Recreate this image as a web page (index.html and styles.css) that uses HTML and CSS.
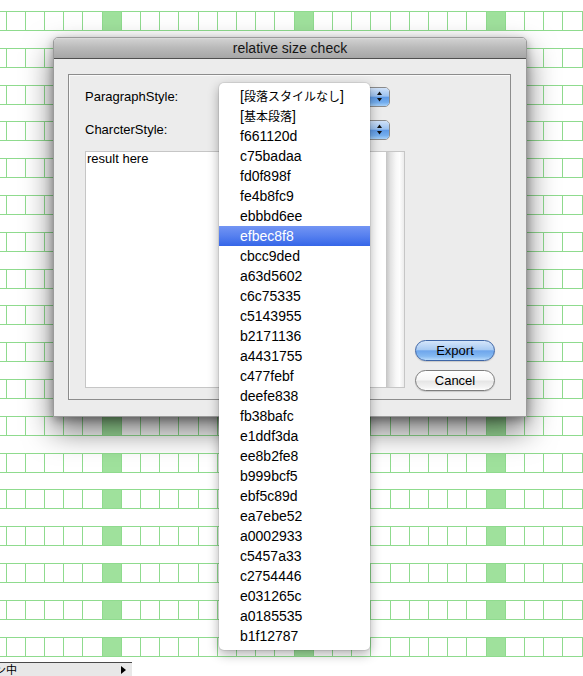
FILE: index.html
```html
<!DOCTYPE html>
<html>
<head>
<meta charset="utf-8">
<link rel="stylesheet" href="styles.css">
</head>
<body>
<div class="desktop">
  <div class="dialog">
    <div class="titlebar">relative size check</div>
    <div class="dialog-body">
      <div class="groupbox">
        <div class="row">
          <span class="label">ParagraphStyle:</span>
          <div class="popup">
            <span class="popup-face"></span>
            <span class="stepper"><svg width="19" height="19" viewBox="0 0 19 19"><polygon points="7,8 12,8 9.5,4.5" fill="#111"/><polygon points="7,11 12,11 9.5,14.5" fill="#111"/></svg></span>
          </div>
        </div>
        <div class="row">
          <span class="label">CharcterStyle:</span>
          <div class="popup">
            <span class="popup-face"></span>
            <span class="stepper"><svg width="19" height="19" viewBox="0 0 19 19"><polygon points="7,8 12,8 9.5,4.5" fill="#111"/><polygon points="7,11 12,11 9.5,14.5" fill="#111"/></svg></span>
          </div>
        </div>
        <div class="bottom">
          <div class="textarea">
            <div class="text">result here</div>
            <div class="scroll"></div>
          </div>
          <div class="buttons">
            <button class="btn primary">Export</button>
            <button class="btn">Cancel</button>
          </div>
        </div>
      </div>
    </div>
  </div>
  <ul class="menu">
    <li>[<span class="cjk">段落スタイルなし</span>]</li>
    <li>[<span class="cjk">基本段落</span>]</li>
    <li>f661120d</li>
    <li>c75badaa</li>
    <li>fd0f898f</li>
    <li>fe4b8fc9</li>
    <li>ebbbd6ee</li>
    <li class="selected">efbec8f8</li>
    <li>cbcc9ded</li>
    <li>a63d5602</li>
    <li>c6c75335</li>
    <li>c5143955</li>
    <li>b2171136</li>
    <li>a4431755</li>
    <li>c477febf</li>
    <li>deefe838</li>
    <li>fb38bafc</li>
    <li>e1ddf3da</li>
    <li>ee8b2fe8</li>
    <li>b999bcf5</li>
    <li>ebf5c89d</li>
    <li>ea7ebe52</li>
    <li>a0002933</li>
    <li>c5457a33</li>
    <li>c2754446</li>
    <li>e031265c</li>
    <li>a0185535</li>
    <li>b1f12787</li>
  </ul>
</div>
<div class="statusbar">
  <div class="status-left">
    <span class="status-text">ン中</span>
    <span class="status-arrow"></span>
  </div>
</div>
</body>
</html>
```
FILE: styles.css
```css
html, body {
  margin: 0;
  padding: 0;
}
body {
  width: 583px;
  height: 676px;
  overflow: hidden;
  background: #fff;
  font-family: "Liberation Sans", "Noto Sans CJK JP", sans-serif;
  color: #000;
}
.desktop {
  position: relative;
  height: 662px;
  background-color: #fff;
  background-image:
    linear-gradient(to bottom,
      transparent 0 20px, #fff 20px 37px,
      transparent 37px 57px, #fff 57px 74px,
      transparent 74px 94px, #fff 94px 110px,
      transparent 110px 130px, #fff 130px 147px,
      transparent 147px 167px, #fff 167px 184px),
    linear-gradient(to bottom,
      #8fdb8e 0 1px, transparent 1px 19px, #8fdb8e 19px 20px, transparent 20px 37px,
      #8fdb8e 37px 38px, transparent 38px 56px, #8fdb8e 56px 57px, transparent 57px 74px,
      #8fdb8e 74px 75px, transparent 75px 93px, #8fdb8e 93px 94px, transparent 94px 110px,
      #8fdb8e 110px 111px, transparent 111px 129px, #8fdb8e 129px 130px, transparent 130px 147px,
      #8fdb8e 147px 148px, transparent 148px 166px, #8fdb8e 166px 167px, transparent 167px 184px),
    linear-gradient(to right,
      #8fdb8e 0 1px, transparent 1px 19px, #8fdb8e 19px 20px, transparent 20px 38px,
      #8fdb8e 38px 39px, transparent 39px 57px, #8fdb8e 57px 58px, transparent 58px 76px,
      #8fdb8e 76px 77px, transparent 77px 96px),
    linear-gradient(to right, transparent 0 96px, #9fe19c 96px 116px, transparent 116px 192px);
  background-size: 100% 184px, 100% 184px, 96px 100%, 192px 100%;
  background-position: 0 11px, 0 11px, 6px 0, 6px 0;
}
.dialog {
  position: absolute;
  left: 53px;
  top: 37px;
  width: 474px;
  height: 380px;
  box-sizing: border-box;
  border: 1px solid #9a9a9a;
  border-radius: 5px 5px 0 0;
  background: #ececec;
  box-shadow: 0 14px 30px rgba(0, 0, 0, 0.55), 0 3px 8px rgba(0, 0, 0, 0.3);
  display: flex;
  flex-direction: column;
}
.titlebar {
  height: 20px;
  line-height: 20px;
  border-bottom: 1px solid #4f4f4f;
  border-radius: 4px 4px 0 0;
  background: linear-gradient(to bottom, #e2e2e2 0, #d0d0d0 1px, #b9b9b9 50%, #a6a6a6 100%);
  text-align: center;
  font-size: 14px;
  color: #151515;
}
.dialog-body {
  padding: 15px 0 0 14px;
}
.groupbox {
  width: 443px;
  height: 326px;
  box-sizing: border-box;
  border: 1px solid #8c8c8c;
  box-shadow: inset 1px 1px 0 #f9f9f9;
  padding: 11px 15px 8px 16px;
  display: flex;
  flex-direction: column;
}
.row {
  height: 21px;
  display: flex;
  align-items: center;
}
.row + .row {
  margin-top: 12px;
}
.label {
  width: 135px;
  font-size: 13px;
  line-height: 16px;
}
.popup {
  width: 170px;
  height: 20px;
  box-sizing: border-box;
  border: 1px solid #8a8a8a;
  border-radius: 5px;
  background: linear-gradient(#ffffff, #f1f1f1);
  display: flex;
  overflow: hidden;
}
.popup-face {
  flex: 1;
}
.stepper {
  width: 19px;
  border-left: 1px solid #4f75b4;
  background: linear-gradient(to bottom, #cfe1f8 0, #9cc2f0 45%, #5e9ae6 52%, #74aeee 80%, #a6d0f8 100%);
  display: flex;
  align-items: center;
  justify-content: center;
}
.stepper svg {
  display: block;
}
.bottom {
  flex: 1;
  margin-top: 11px;
  display: flex;
}
.textarea {
  width: 320px;
  height: 237px;
  box-sizing: border-box;
  border: 1px solid #c6c6c6;
  background: #fff;
  display: flex;
  align-self: flex-start;
}
.text {
  flex: 1;
  padding-left: 1px;
  font-size: 13px;
  line-height: 13px;
}
.scroll {
  width: 18px;
  background: linear-gradient(to right, #c4c4c4 0, #e2e2e2 25%, #f7f7f7 55%, #fdfdfd 75%, #ececec 100%);
}
.buttons {
  margin-left: 10px;
  align-self: flex-end;
  display: flex;
  flex-direction: column;
  gap: 9px;
}
.btn {
  width: 80px;
  height: 21px;
  box-sizing: border-box;
  margin: 0;
  padding: 0;
  border: 1px solid #7d7d7d;
  border-radius: 11px;
  font-family: "Liberation Sans", sans-serif;
  font-size: 13px;
  line-height: 19px;
  color: #000;
  background: linear-gradient(to bottom, #ffffff 0, #f6f6f6 45%, #e6e6e6 55%, #f3f3f3 85%, #ffffff 100%);
  box-shadow: 0 1px 1px rgba(0, 0, 0, 0.15);
}
.btn.primary {
  border-color: #3f66a6;
  background: linear-gradient(to bottom, #d4e5fa 0, #a9cbf3 45%, #6ea6ec 52%, #85b9f1 80%, #b8dafb 100%);
}
.menu {
  position: absolute;
  left: 219px;
  top: 83px;
  width: 151px;
  margin: 0;
  padding: 3px 0 4px;
  list-style: none;
  background: #fff;
  border-radius: 5px;
  box-shadow: 0 4px 12px rgba(0, 0, 0, 0.33), 0 0 0 1px rgba(0, 0, 0, 0.07);
}
.menu li {
  height: 20px;
  line-height: 20px;
  padding-left: 21px;
  font-size: 14px;
  white-space: nowrap;
}
.menu .cjk {
  font-family: "Noto Sans CJK JP", sans-serif;
  font-size: 12px;
}
.menu li.selected {
  color: #fff;
  background: linear-gradient(to bottom, #7395f4 0, #5680ef 50%, #3566e8 100%);
}
.statusbar {
  height: 14px;
  display: flex;
}
.status-left {
  width: 132px;
  box-sizing: border-box;
  border-top: 1px solid #4a4a4a;
  background: #e8e8e8;
  display: flex;
  align-items: center;
  overflow: hidden;
}
.status-text {
  margin-left: -5px;
  font-family: "Noto Sans CJK JP", sans-serif;
  font-size: 11px;
  line-height: 13px;
  flex: 1;
}
.status-arrow {
  width: 0;
  height: 0;
  border-top: 4px solid transparent;
  border-bottom: 4px solid transparent;
  border-left: 5px solid #000;
  margin-right: 6px;
}
```
